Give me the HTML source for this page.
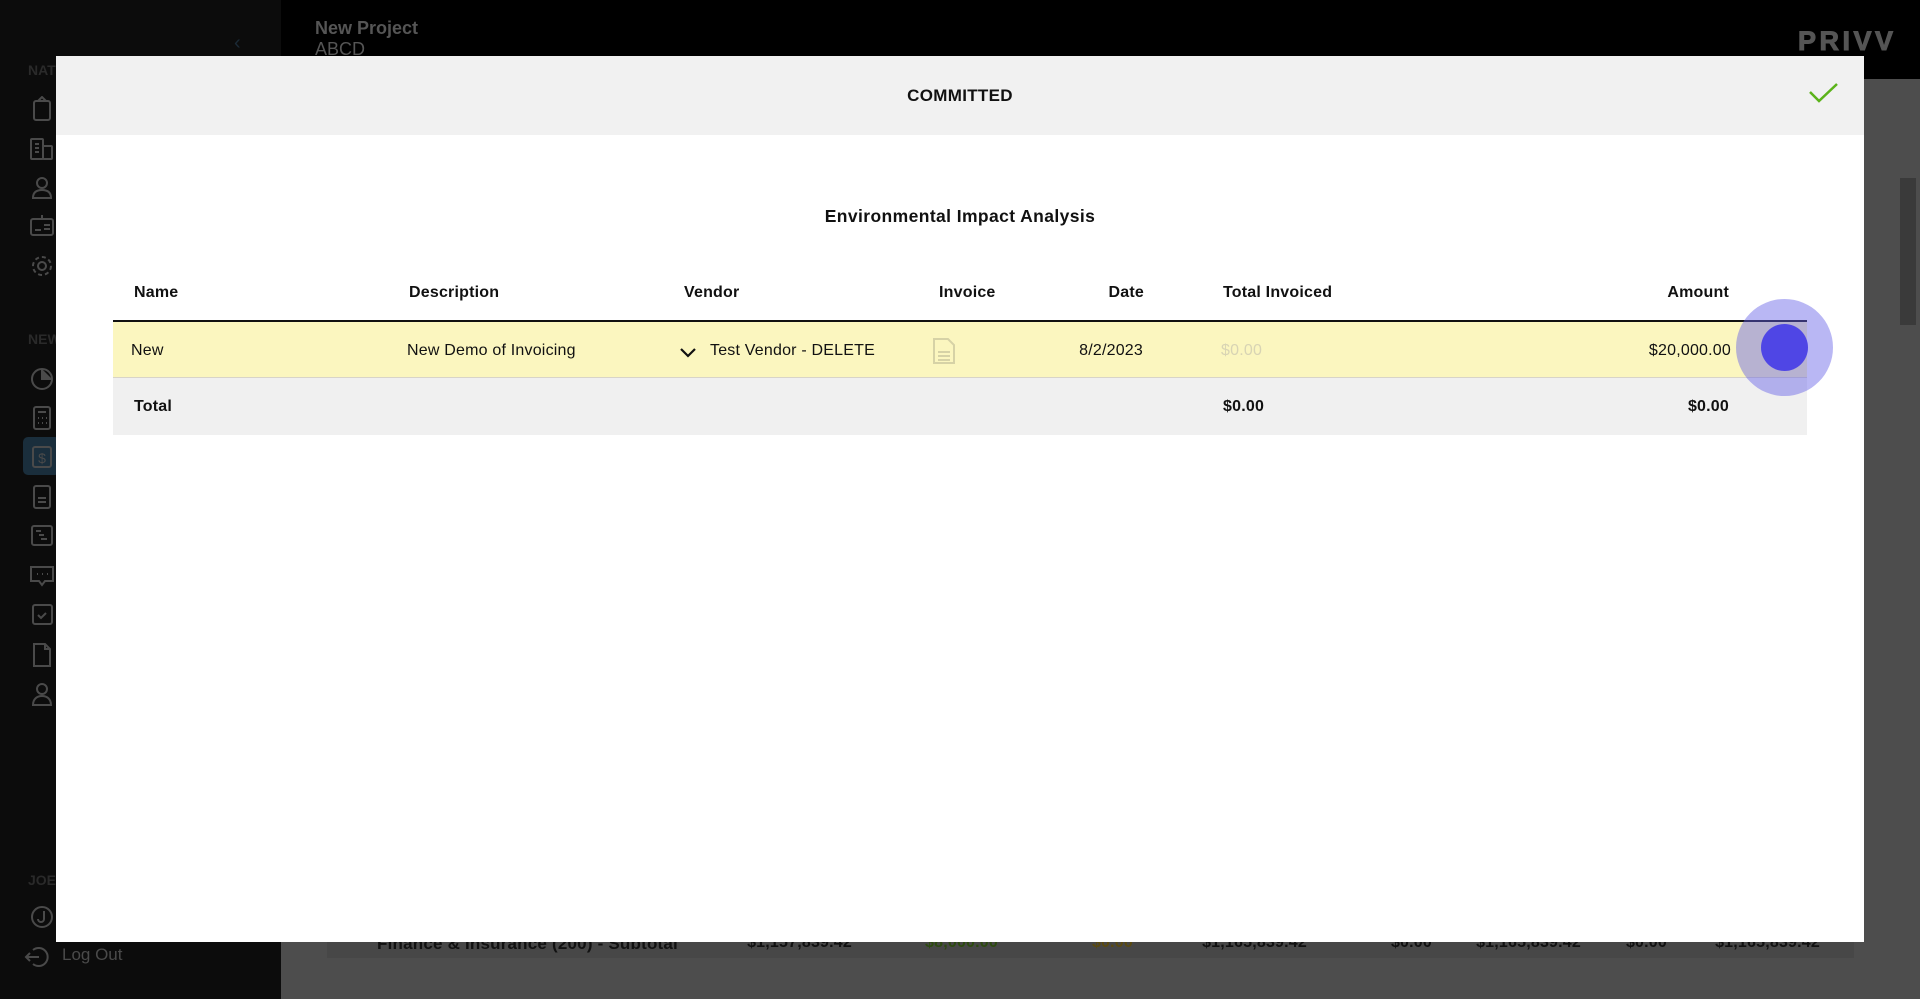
<!DOCTYPE html>
<html><head><meta charset="utf-8"><style>
*{margin:0;padding:0;box-sizing:border-box}
body{width:1920px;height:999px;overflow:hidden;background:#4d4d4d;font-family:"Liberation Sans",sans-serif;position:relative}
.sb{position:absolute;left:0;top:0;width:281px;height:999px;background:#0c0c0c}
.top{position:absolute;left:281px;top:0;right:0;height:79px;background:#000}
.ic{position:absolute;left:29px;width:26px;height:26px}
.ic svg{width:26px;height:26px;fill:none;stroke:#4a4a4a;stroke-width:2}
.lbl{position:absolute;left:28px;color:#2a2a2a;font-weight:bold;font-size:14px}
.modal{position:absolute;left:56px;top:56px;width:1808px;height:886px;background:#fff}
.mh{height:79px;background:#f1f1f1;text-align:center;line-height:79px;font-weight:bold;font-size:17px;color:#111;letter-spacing:.3px}
.t{position:absolute;font-size:16px;color:#111;white-space:nowrap;letter-spacing:.2px}
.b{font-weight:bold}
.r{text-align:right}
</style></head><body>
<div class="sb">
<div style="position:absolute;left:234px;top:32px;color:#1b2a36;font-size:20px">‹</div>
<div class="lbl" style="top:62px">NAT</div>
<div class="ic" style="top:96px"><svg viewBox="0 0 26 26"><rect x="5" y="5" width="16" height="19" rx="2"/><path d="M9 5 L13 1 L17 5"/></svg></div>
<div class="ic" style="top:136px"><svg viewBox="0 0 26 26"><rect x="2" y="3" width="12" height="20" rx="1"/><rect x="14" y="10" width="9" height="13" rx="1"/><path d="M6 8h4M6 12h4M6 16h4"/></svg></div>
<div class="ic" style="top:174px"><svg viewBox="0 0 26 26"><circle cx="13" cy="9" r="5"/><path d="M4 24c0-6 4-8 9-8s9 2 9 8z"/></svg></div>
<div class="ic" style="top:213px"><svg viewBox="0 0 26 26"><rect x="2" y="6" width="22" height="16" rx="2"/><path d="M13 2v5M6 17h6M15 12h6M15 16h6"/></svg></div>
<div class="ic" style="top:253px"><svg viewBox="0 0 26 26"><circle cx="13" cy="13" r="4"/><circle cx="13" cy="13" r="9" stroke-dasharray="4 3"/></svg></div>
<div class="lbl" style="top:331px">NEW</div>
<div class="ic" style="top:366px"><svg viewBox="0 0 26 26"><circle cx="13" cy="13" r="10"/><path d="M13 3v10h10" fill="#4a4a4a"/></svg></div>
<div class="ic" style="top:405px"><svg viewBox="0 0 26 26"><rect x="5" y="2" width="16" height="22" rx="2"/><path d="M9 7h8M9 13h1M13 13h1M17 13h1M9 18h1M13 18h1M17 18h1"/></svg></div>
<div style="position:absolute;left:23px;top:437px;width:37px;height:38px;background:#1a2e3c;border-radius:5px"></div>
<div class="ic" style="top:444px"><svg viewBox="0 0 26 26"><rect x="4" y="3" width="18" height="20" rx="2"/><text x="13" y="19" font-size="14" fill="#4a4a4a" stroke="none" text-anchor="middle" font-family="Liberation Sans">$</text></svg></div>
<div class="ic" style="top:484px"><svg viewBox="0 0 26 26"><rect x="5" y="2" width="16" height="22" rx="2"/><path d="M9 14h8M9 18h8"/></svg></div>
<div class="ic" style="top:523px"><svg viewBox="0 0 26 26"><rect x="3" y="3" width="20" height="19" rx="2"/><path d="M7 8h5M10 12h5M12 16h6"/></svg></div>
<div class="ic" style="top:563px"><svg viewBox="0 0 26 26"><path d="M2 4h22v14H16l-3 4-3-4H2z"/><path d="M8 11h1M13 11h1M18 11h1"/></svg></div>
<div class="ic" style="top:602px"><svg viewBox="0 0 26 26"><rect x="4" y="3" width="19" height="19" rx="2"/><path d="M9 13l3 3 5-5"/></svg></div>
<div class="ic" style="top:642px"><svg viewBox="0 0 26 26"><path d="M5 2h11l5 5v17H5z"/><path d="M16 2v5h5"/></svg></div>
<div class="ic" style="top:681px"><svg viewBox="0 0 26 26"><circle cx="13" cy="8" r="5"/><path d="M4 24c0-6 4-9 9-9s9 3 9 9z"/></svg></div>
<div class="lbl" style="top:872px">JOE</div>
<div class="ic" style="top:904px"><svg viewBox="0 0 26 26"><circle cx="13" cy="13" r="10"/><path d="M15 7v8a3 3 0 0 1-6 0"/></svg></div>
<div class="ic" style="top:944px;left:24px;width:30px"><svg viewBox="0 0 26 26"><path d="M9 6a9 9 0 1 1 0 14M2 13h13M6 9l-4 4 4 4"/></svg></div>
<div style="position:absolute;left:62px;top:945px;color:#4a4a4a;font-size:17px">Log Out</div>
</div>
<div class="top">
<div style="position:absolute;left:34px;top:18px;color:#555;font-weight:bold;font-size:18px">New Project</div>
<div style="position:absolute;left:34px;top:39px;color:#555;font-size:18px">ABCD</div>
<div style="position:absolute;left:1517px;top:26px;color:#555;font-weight:bold;font-size:27px;letter-spacing:3.5px;-webkit-text-stroke:1px #555">PRIVV</div>
</div>
<div style="position:absolute;left:1900px;top:178px;width:16px;height:147px;background:#3a3a3a"></div>
<div style="position:absolute;left:327px;top:900px;width:1527px;height:58px;background:#474747"></div>
<div class="t b" style="left:377px;top:934px;color:#111;font-size:17px">Finance &amp; Insurance (200) - Subtotal</div>
<div class="t b" style="left:740px;top:934px;width:112px;color:#111;text-align:right">$1,157,839.42</div>
<div class="t b" style="left:900px;top:934px;width:98px;color:#2d4a10;text-align:right">$8,000.00</div>
<div class="t b" style="left:1060px;top:934px;width:73px;color:#5a4a10;text-align:right">$0.00</div>
<div class="t b" style="left:1190px;top:934px;width:117px;color:#111;text-align:right">$1,165,839.42</div>
<div class="t b" style="left:1360px;top:934px;width:72px;color:#111;text-align:right">$0.00</div>
<div class="t b" style="left:1460px;top:934px;width:121px;color:#111;text-align:right">$1,165,839.42</div>
<div class="t b" style="left:1600px;top:934px;width:67px;color:#111;text-align:right">$0.00</div>
<div class="t b" style="left:1700px;top:934px;width:120px;color:#111;text-align:right">$1,165,839.42</div>

<div class="modal">
<div class="mh">COMMITTED</div>
<svg style="position:absolute;left:1752px;top:26px" width="32" height="22" viewBox="0 0 32 22"><path d="M2 10l9 9L29 2" fill="none" stroke="#5bb31a" stroke-width="2.5"/></svg>
<div class="t b" style="left:0;width:1808px;text-align:center;top:150px;font-size:17.5px;letter-spacing:.4px">Environmental Impact Analysis</div>
<div style="position:absolute;left:57px;top:264px;width:1694px;height:2px;background:#111"></div>
<div style="position:absolute;left:57px;top:266px;width:1694px;height:56px;background:#fbf6bf;border-bottom:1px solid #d8d4c8"></div>
<div style="position:absolute;left:57px;top:322px;width:1694px;height:57px;background:#f0f0f0"></div>
<div class="t b" style="left:78px;top:228px">Name</div>
<div class="t b" style="left:353px;top:228px">Description</div>
<div class="t b" style="left:628px;top:228px">Vendor</div>
<div class="t b" style="left:883px;top:228px">Invoice</div>
<div class="t b r" style="left:988px;width:100px;top:228px">Date</div>
<div class="t b" style="left:1167px;top:228px">Total Invoiced</div>
<div class="t b r" style="left:1573px;width:100px;top:228px">Amount</div>
<div class="t" style="left:75px;top:286px">New</div>
<div class="t" style="left:351px;top:286px">New Demo of Invoicing</div>
<svg style="position:absolute;left:623px;top:291px" width="18" height="12" viewBox="0 0 18 12"><path d="M2 2l7 7 7-7" fill="none" stroke="#111" stroke-width="2.2"/></svg>
<div class="t" style="left:654px;top:286px">Test Vendor - DELETE</div>
<svg style="position:absolute;left:876px;top:281px" width="24" height="28" viewBox="0 0 24 28"><path d="M2 2h14l6 6v18H2z" fill="none" stroke="#d6d2a6" stroke-width="2"/><path d="M6 15h12M6 19h12M6 23h12" stroke="#d6d2a6" stroke-width="2"/></svg>
<div class="t r" style="left:987px;width:100px;top:286px">8/2/2023</div>
<div class="t" style="left:1165px;top:286px;color:#d8d4b4">$0.00</div>
<div class="t r" style="left:1475px;width:200px;top:286px">$20,000.00</div>
<div class="t b" style="left:78px;top:342px">Total</div>
<div class="t b" style="left:1167px;top:342px">$0.00</div>
<div class="t b r" style="left:1573px;width:100px;top:342px">$0.00</div>
</div>
<div style="position:absolute;left:1736px;top:299px;width:97px;height:97px;border-radius:50%;background:rgba(100,96,230,.45)"></div>
<div style="position:absolute;left:1761px;top:324px;width:47px;height:47px;border-radius:50%;background:#4f46e5"></div>
</body></html>
